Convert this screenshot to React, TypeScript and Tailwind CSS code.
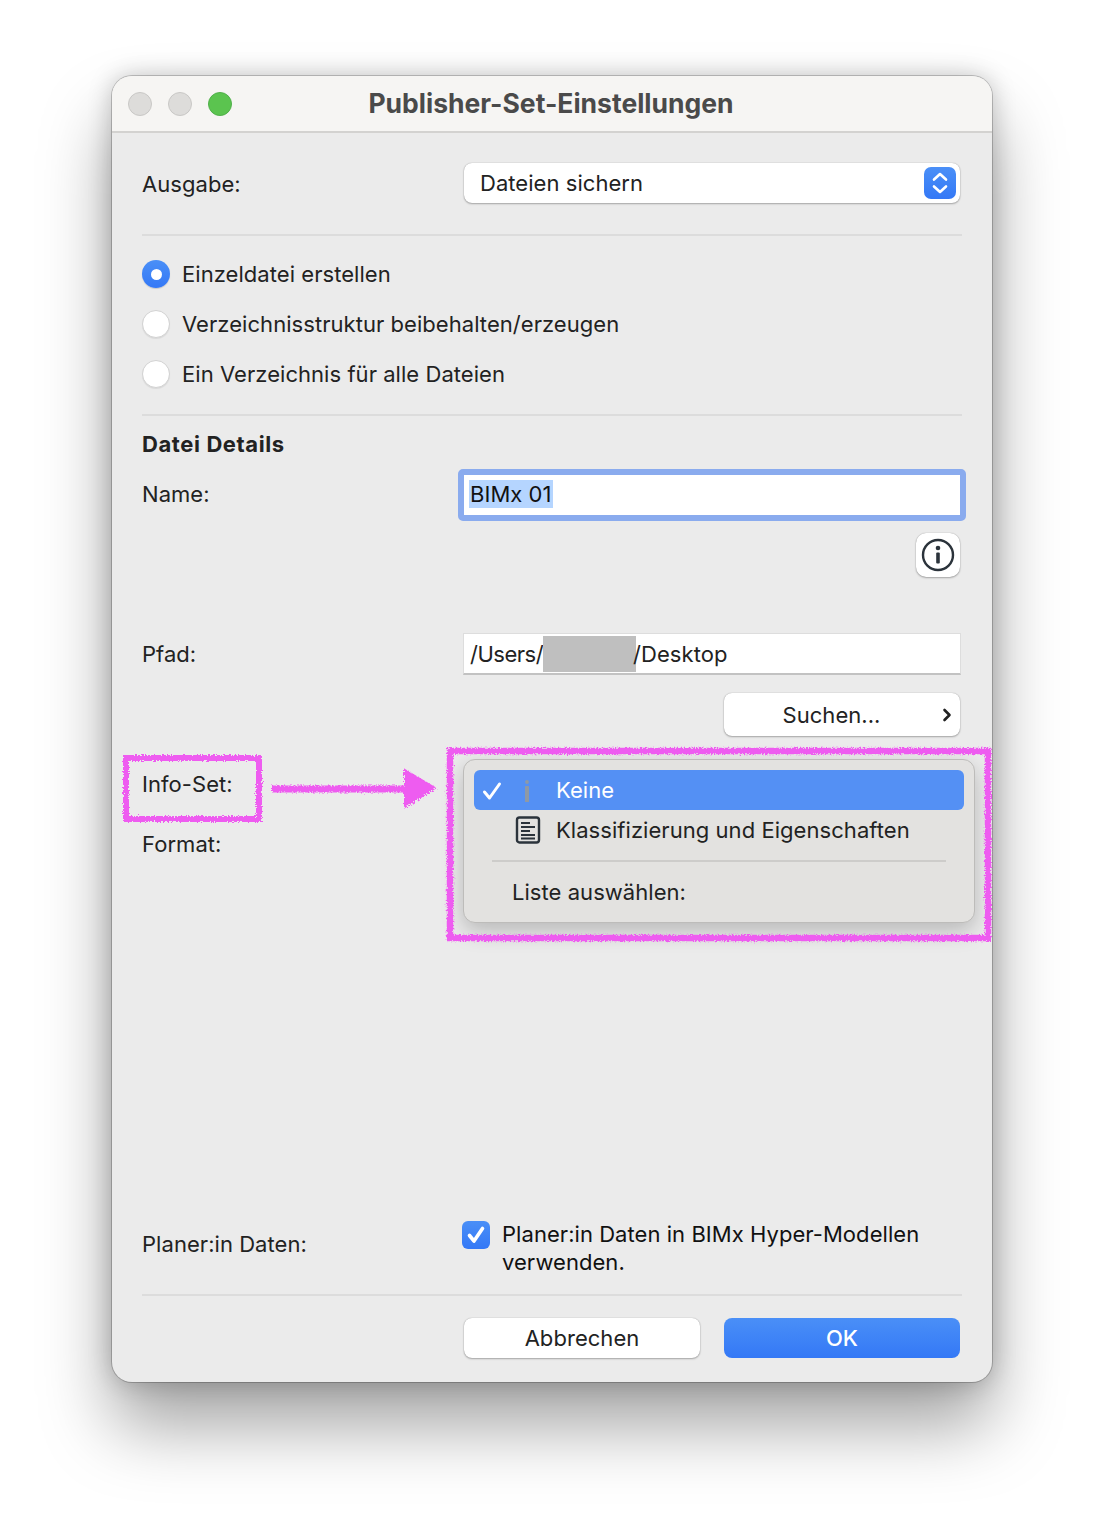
import React from "react";

const font = { fontFamily: "Inter, 'Noto Sans', sans-serif" };

function Radio({ on, label }: { on?: boolean; label: string }) {
  return (
    <div className="flex h-[50px] items-center gap-[12px]">
      {on ? (
        <span className="flex h-[28px] w-[28px] items-center justify-center rounded-full bg-gradient-to-b from-[#4a8ff7] to-[#3478f6] shadow-[0_1px_1px_rgba(0,0,0,0.15)]">
          <span className="h-[11px] w-[11px] rounded-full bg-white" />
        </span>
      ) : (
        <span className="h-[28px] w-[28px] rounded-full border border-[#d2d2d2] bg-white shadow-[0_1px_1px_rgba(0,0,0,0.08)]" />
      )}
      <span>{label}</span>
    </div>
  );
}

function Divider() {
  return <div className="h-[2px] w-[820px] bg-[#dcdcdc]" />;
}

const btn = "bg-white rounded-[8px] shadow-[0_0_1px_rgba(0,0,0,0.35),0_1px_2px_rgba(0,0,0,0.28)]";

export default function App() {
  return (
    <div className="relative h-[1530px] w-[1104px] overflow-hidden bg-white pt-[76px] text-[22px] leading-[28px] tracking-[0.05px] text-[#222222]" style={font}>
      <div className="relative mx-auto flex h-[1306px] w-[880px] flex-col rounded-[20px] bg-[#ebebeb] shadow-[0_0_0_1px_rgba(0,0,0,0.2),0_0_24px_rgba(0,0,0,0.22),0_44px_70px_rgba(0,0,0,0.36)]">
        {/* Title bar */}
        <div className="relative flex h-[57px] shrink-0 items-center justify-center rounded-t-[20px] border-b-2 border-[#d3d2d0] bg-[#f6f5f3] pb-[2px] pr-[2px]">
          <div className="absolute left-[16px] top-[16px] flex gap-[16px]">
            <span className="h-[24px] w-[24px] rounded-full border border-[#c9c8c6] bg-[#dddcda]" />
            <span className="h-[24px] w-[24px] rounded-full border border-[#c9c8c6] bg-[#dddcda]" />
            <span className="h-[24px] w-[24px] rounded-full border border-[#50b04a] bg-[#5bc44f]" />
          </div>
          <span className="text-[26.5px] font-bold tracking-normal text-[#4a4a4a]">Publisher-Set-Einstellungen</span>
        </div>

        <div className="relative flex grow flex-col pl-[30px]">
          {/* Ausgabe */}
          <div className="mt-[30px] flex h-[40px] items-center">
            <span className="w-[322px] pt-[2px]">Ausgabe:</span>
            <div className={`${btn} flex h-[40px] w-[496px] items-center justify-between pl-[16px] pr-[4px]`}>
              <span>Dateien sichern</span>
              <span className="flex h-[32px] w-[32px] items-center justify-center rounded-[7px] bg-gradient-to-b from-[#4a8ff7] to-[#3478f6]">
                <svg width="18" height="28" viewBox="0 0 18 28" fill="none" stroke="white" strokeWidth="2.6" strokeLinecap="round" strokeLinejoin="round">
                  <path d="M3 10.5 9 5l6 5.5" />
                  <path d="M3 17.5 9 23l6-5.5" />
                </svg>
              </span>
            </div>
          </div>
          <div className="mt-[31px]"><Divider /></div>

          {/* Radios */}
          <div className="mt-[13px] flex flex-col">
            <Radio on label="Einzeldatei erstellen" />
            <Radio label="Verzeichnisstruktur beibehalten/erzeugen" />
            <Radio label="Ein Verzeichnis für alle Dateien" />
          </div>
          <div className="mt-[15px]"><Divider /></div>

          <div className="mt-[14px] font-bold tracking-[0.6px]">Datei Details</div>

          {/* Name */}
          <div className="mt-[11px] flex h-[52px] items-center">
            <span className="w-[316px] pb-[2px]">Name:</span>
            <div className="flex h-[52px] w-[508px] items-center rounded-[5px] border-[6px] border-[#8aabee] bg-white pb-[2px] pl-[5px] text-[#111111]">
              <span className="bg-[#b5d5ff] px-[1px]">BIMx 01</span>
            </div>
          </div>

          {/* Info */}
          <div className="mt-[12px] flex w-[818px] justify-end">
            <div className={`${btn} flex h-[44px] w-[44px] items-center justify-center rounded-[10px]`}>
              <svg width="34" height="34" viewBox="0 0 34 34" fill="none">
                <circle cx="17" cy="17" r="15" stroke="#2b333b" strokeWidth="2.4" />
                <circle cx="17" cy="10" r="2.3" fill="#2b333b" />
                <rect x="15.2" y="14.5" width="3.6" height="11" rx="1" fill="#2b333b" />
              </svg>
            </div>
          </div>

          {/* Pfad */}
          <div className="mt-[56px] flex h-[42px] items-center">
            <span className="w-[321px]">Pfad:</span>
            <div className="flex h-[42px] w-[498px] items-center border-x border-t border-[#dddddd] border-b-2 border-b-[#c2c2c2] bg-white pl-[6px]">
              <span className="tracking-[-0.5px]">/Users/</span>
              <span className="-mr-[3px] h-[36px] w-[93px] bg-[#bfbfbf]" />
              <span>/Desktop</span>
            </div>
          </div>

          {/* Suchen */}
          <div className="mt-[18px] flex w-[818px] justify-end">
            <div className={`${btn} relative flex h-[43px] w-[236px] items-center justify-center pr-[21px]`}>
              <span>Suchen...</span>
              <svg className="absolute right-[8px] top-[15px]" width="10" height="14" viewBox="0 0 10 14" fill="none" stroke="#222" strokeWidth="2.6" strokeLinecap="round" strokeLinejoin="round">
                <path d="M2.5 2 7.5 7l-5 5" />
              </svg>
            </div>
          </div>

          {/* Info-Set / Format */}
          <div className="mt-[34px]">Info-Set:</div>
          <div className="mt-[32px]">Format:</div>

          {/* Popup */}
          <div className="absolute left-[351px] top-[626px] flex h-[164px] w-[512px] flex-col rounded-[12px] border border-[#bdbcba] bg-[#e3e2e0] px-[10px] pt-[10px] shadow-[0_8px_22px_rgba(0,0,0,0.22)]">
            <div className="relative flex h-[40px] items-center rounded-[6px] bg-[#5490f4] pl-[82px] text-white">
              <svg className="absolute left-[8px] top-[11px]" width="20" height="20" viewBox="0 0 20 20" fill="none" stroke="white" strokeWidth="3" strokeLinecap="round" strokeLinejoin="round">
                <path d="M2.5 11 7.5 17 17.5 3" />
              </svg>
              <svg className="absolute left-[50px] top-[10px]" width="6" height="22" viewBox="0 0 6 22" fill="#8f99a5">
                <circle cx="3" cy="2" r="1.9" />
                <rect x="1" y="6" width="4" height="16" rx="0.6" />
              </svg>
              <span>Keine</span>
            </div>
            <div className="relative flex h-[40px] items-center pl-[82px] text-[#222222]">
              <svg className="absolute left-[41px] top-[6px]" width="26" height="28" viewBox="0 0 26 28" fill="none" stroke="#2b333b">
                <rect x="2" y="1.5" width="22" height="25" rx="2.5" strokeWidth="2.4" />
                <path d="M6 7h9M6 11h14M6 15h9M6 19h14M6 22.5h14" strokeWidth="1.8" />
              </svg>
              <span>Klassifizierung und Eigenschaften</span>
            </div>
            <div className="ml-[18px] mt-[10px] h-[2px] w-[454px] bg-[#cdccca]" />
            <div className="ml-[38px] mt-[16px]">Liste auswählen:</div>
          </div>

          {/* Bottom */}
          <div className="mt-auto flex items-start">
            <span className="mt-[10px] w-[320px]">Planer:in Daten:</span>
            <div className="flex gap-[12px]">
              <span className="mt-[1px] flex h-[28px] w-[28px] shrink-0 items-center justify-center rounded-[6px] bg-gradient-to-b from-[#4a8ff7] to-[#3478f6]">
                <svg width="20" height="20" viewBox="0 0 20 20" fill="none" stroke="white" strokeWidth="3.6" strokeLinecap="round" strokeLinejoin="round">
                  <path d="M3.5 10.5 8 16 16.5 3.5" />
                </svg>
              </span>
              <span className="w-[440px] text-[#111111]">Planer:in Daten in BIMx Hyper-Modellen verwenden.</span>
            </div>
          </div>
          <div className="mt-[18px]"><Divider /></div>
          <div className="mb-[24px] mt-[22px] flex h-[40px] w-[818px] justify-end gap-[24px]">
            <div className={`${btn} flex h-[40px] w-[236px] items-center justify-center`}>Abbrechen</div>
            <div className="flex h-[40px] w-[236px] items-center justify-center rounded-[8px] bg-gradient-to-b from-[#4a8ff7] to-[#3478f6] font-medium text-white">OK</div>
          </div>
        </div>
      </div>

      {/* Hand-drawn annotations */}
      <svg className="pointer-events-none absolute left-0 top-0" width="1104" height="1530" viewBox="0 0 1104 1530" fill="none">
        <defs>
          <filter id="rough" x="-5%" y="-5%" width="110%" height="110%">
            <feTurbulence type="fractalNoise" baseFrequency="0.7" numOctaves="2" seed="4" />
            <feDisplacementMap in="SourceGraphic" scale="5" />
          </filter>
        </defs>
        <g filter="url(#rough)" stroke="#ee5cf0" fill="none">
          <rect x="126" y="758" width="133" height="61" strokeWidth="6" />
          <rect x="450" y="751" width="538" height="187" strokeWidth="6.5" />
          <path d="M272 789H408" strokeWidth="7" />
          <path d="M405 770 435 788 405 807Z" strokeWidth="2" fill="#ee5cf0" />
        </g>
      </svg>
    </div>
  );
}
